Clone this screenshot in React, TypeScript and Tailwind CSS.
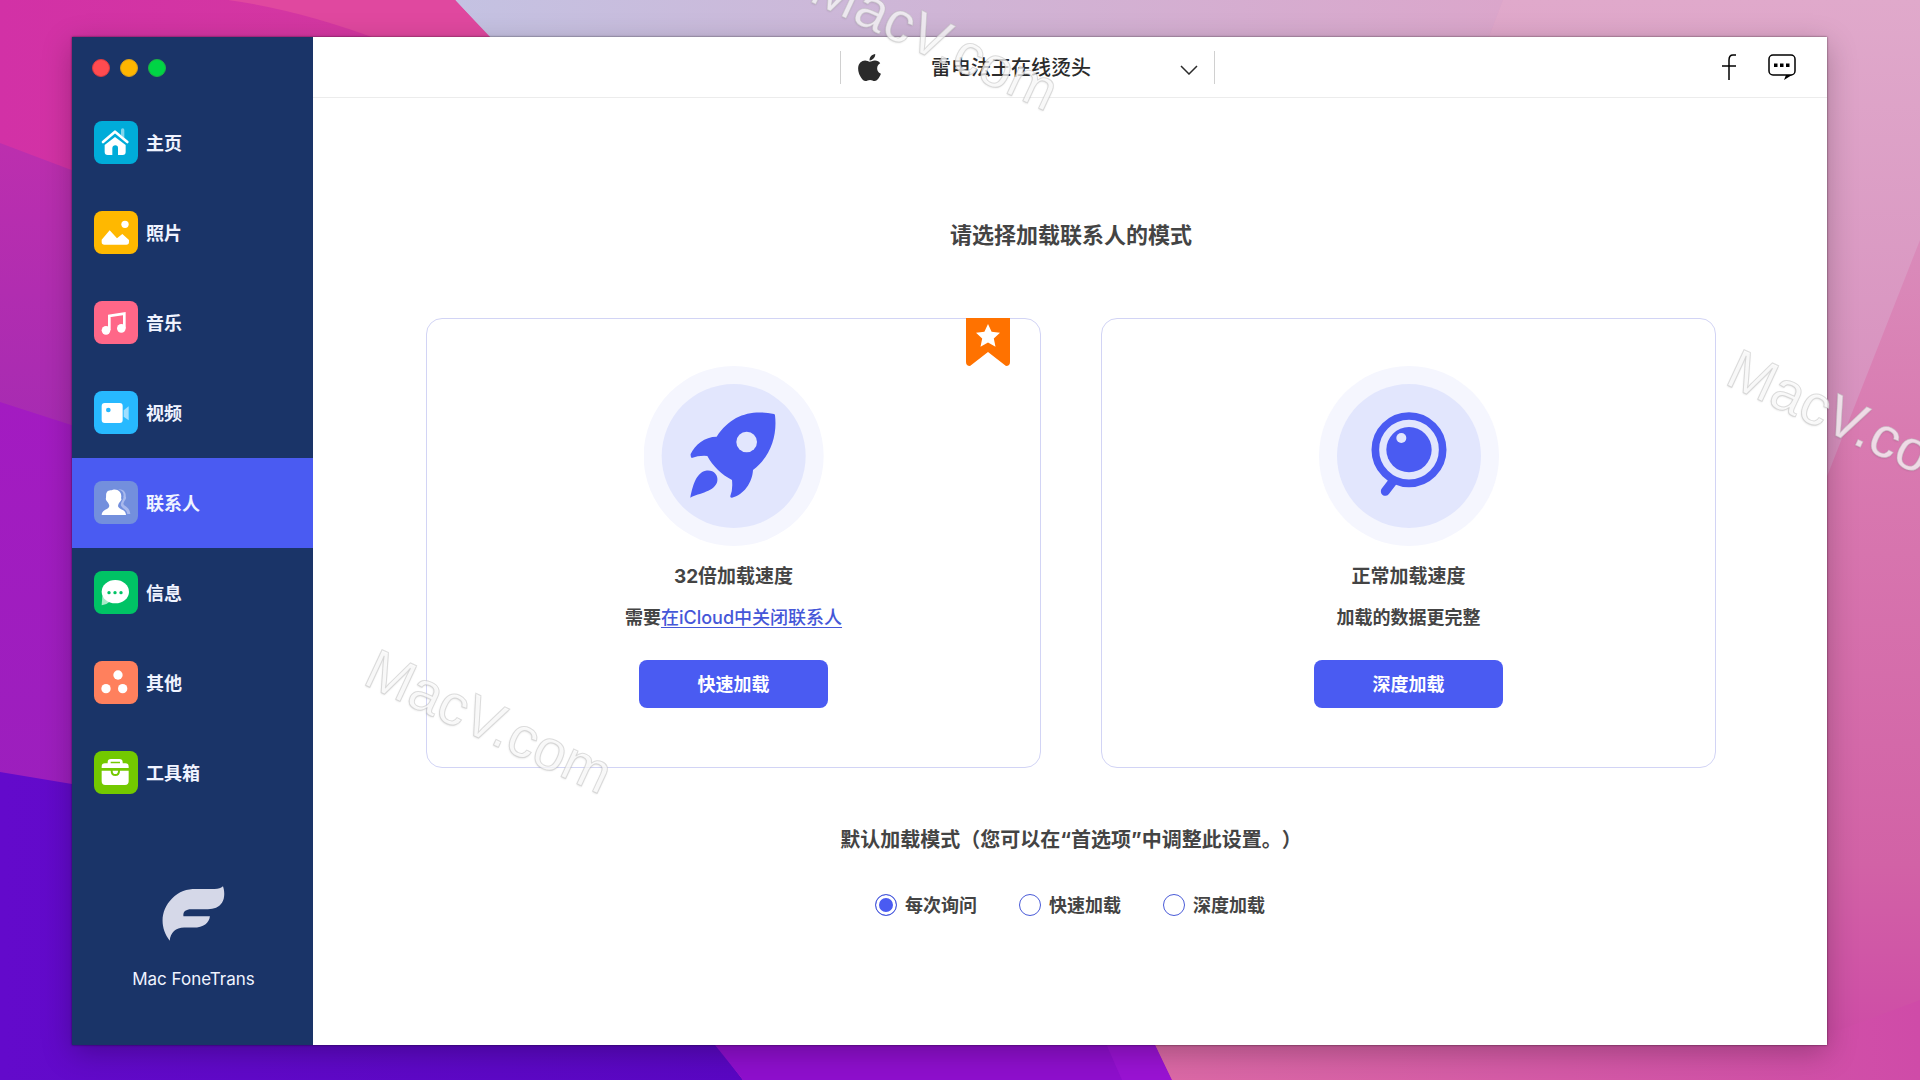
import type { ReactNode } from "react";
import { FaApple } from "react-icons/fa";

/* ---------- sidebar glyphs ---------- */

function Tile({ color, box, children }: { color: string; box: string; children: ReactNode }) {
  const [x, y] = box.split(" ").map(Number);
  return (
    <svg viewBox={box} className="h-[43px] w-11 shrink-0" aria-hidden="true">
      <rect x={x} y={y} width="132" height="129" rx="24" fill={color} />
      {children}
    </svg>
  );
}

const HomeTile = (
  <Tile color="#00acd9" box="103 273 132 129">
    <path d="M184 300q0-5 5-5t5 5v24l-10-8z" fill="#7fd6ec" />
    <path d="M130 336 166 305 203 336" fill="none" stroke="#fff" strokeWidth="8" strokeLinecap="round" strokeLinejoin="round" />
    <path d="M135 345 166 321 198 345V366q0 9-9 9H175V354q0-8-8-8t-9 8V375H144q-9 0-9-9z" fill="#fff" />
  </Tile>
);

const PhotoTile = (
  <Tile color="#ffb800" box="103 543 132 129">
    <circle cx="196" cy="583" r="11" fill="#fff" />
    <path d="M126 629 150 601 172 625 188 612 208 630V636q0 8-8 8H134q-8 0-8-8z" fill="#fff" />
  </Tile>
);

const MusicTile = (
  <Tile color="#ff6788" box="103 813 132 129">
    <path d="M149 900V858L194 851V894" fill="none" stroke="#fff" strokeWidth="8" />
    <circle cx="139" cy="901" r="13" fill="#fff" />
    <circle cx="185" cy="895" r="13" fill="#fff" />
  </Tile>
);

const VideoTile = (
  <Tile color="#27b9ff" box="103 1083 132 129">
    <path d="M192 1141 207 1129V1171L192 1160z" fill="#9fdfff" />
    <rect x="126" y="1119" width="63" height="60" rx="9" fill="#fff" />
    <circle cx="146" cy="1140" r="7" fill="#27b9ff" />
  </Tile>
);

const ContactsTile = (
  <Tile color="#738fdd" box="103 153 132 129">
    <path d="M176 178C190 176 200 187 198 199C203 207 192 212 191 222C196 231 209 230 212 252H203C202 239 190 237 184 227C181 216 194 207 191 200C194 189 188 182 176 178z" fill="#a9b9ed" />
    <path d="M142 186C146 179 154 182 160 179C178 176 188 190 184 205C190 211 176 216 175 229C179 241 198 236 199 255H126C127 237 146 241 149 228C148 216 136 213 139 203C140 196 138 191 142 186z" fill="#fff" />
  </Tile>
);

const MessageTile = (
  <Tile color="#00c365" box="103 423 132 129">
    <path d="M128 498 126 526Q142 524 152 514z" fill="#a8ebc9" />
    <ellipse cx="167" cy="485" rx="41" ry="35" fill="#fff" />
    <g fill="#00c365">
      <circle cx="148" cy="488" r="5" />
      <circle cx="166" cy="488" r="5" />
      <circle cx="184" cy="488" r="5" />
    </g>
  </Tile>
);

const OtherTile = (
  <Tile color="#ff805d" box="103 693 132 129">
    <g fill="#fff">
      <circle cx="175" cy="735" r="14" />
      <circle cx="139" cy="776" r="14" />
      <circle cx="189" cy="776" r="14" />
    </g>
  </Tile>
);

const ToolboxTile = (
  <Tile color="#73c900" box="103 963 132 129">
    <path d="M126 1014V1010Q126 1000 136 1000H144V997Q144 987 154 987H179Q189 987 189 997V1000H197Q207 1000 207 1010V1014zM153 1000H181V995H153z" fill="#fff" fillRule="evenodd" />
    <path d="M126 1022H153Q153 1038 167 1038T181 1022H207V1054Q207 1065 196 1065H137Q126 1065 126 1054z" fill="#fff" />
    <path d="M159 1022H175Q175 1032 167 1032T159 1022z" fill="#fff" />
  </Tile>
);

const navItems = [
  { label: "主页", icon: HomeTile },
  { label: "照片", icon: PhotoTile },
  { label: "音乐", icon: MusicTile },
  { label: "视频", icon: VideoTile },
  { label: "联系人", icon: ContactsTile, active: true },
  { label: "信息", icon: MessageTile },
  { label: "其他", icon: OtherTile },
  { label: "工具箱", icon: ToolboxTile },
];

/* ---------- desktop backdrop ---------- */

function Wallpaper() {
  return (
    <svg className="absolute inset-0 h-full w-full" viewBox="0 0 1920 1080" preserveAspectRatio="none" aria-hidden="true">
      <defs>
        <linearGradient id="w-top" x1="0" x2="1">
          <stop offset="0" stopColor="#c4c2e2" />
          <stop offset="0.5" stopColor="#d0b4d5" />
          <stop offset="1" stopColor="#dba6cb" />
        </linearGradient>
        <linearGradient id="w-magenta" x1="0" x2="1">
          <stop offset="0" stopColor="#d231a6" />
          <stop offset="1" stopColor="#d53a9f" />
        </linearGradient>
        <linearGradient id="w-left" x1="0" y1="0" x2="0" y2="1">
          <stop offset="0" stopColor="#bc2fae" />
          <stop offset="1" stopColor="#a62bb2" />
        </linearGradient>
        <linearGradient id="w-left2" x1="0" y1="0" x2="0" y2="1">
          <stop offset="0" stopColor="#a31bc1" />
          <stop offset="1" stopColor="#9c1fbd" />
        </linearGradient>
        <linearGradient id="w-violet" x1="0" x2="1">
          <stop offset="0" stopColor="#630acb" />
          <stop offset="1" stopColor="#5a07c4" />
        </linearGradient>
        <linearGradient id="w-right" x1="0" y1="0" x2="0" y2="1">
          <stop offset="0" stopColor="#dba0c6" />
          <stop offset="0.4" stopColor="#d97bb1" />
          <stop offset="0.8" stopColor="#d262a6" />
          <stop offset="1" stopColor="#cd47a6" />
        </linearGradient>
        <linearGradient id="w-corner" x1="0" y1="0" x2="0" y2="1">
          <stop offset="0" stopColor="#e0a9cb" />
          <stop offset="1" stopColor="#d58abb" />
        </linearGradient>
        <linearGradient id="w-base" x1="0" x2="1">
          <stop offset="0" stopColor="#dc6aa6" />
          <stop offset="1" stopColor="#cf4ba8" />
        </linearGradient>
      </defs>
      <rect width="1920" height="1080" fill="url(#w-right)" />
      <path d="M455 0H1503L1480 60H500z" fill="url(#w-top)" />
      <path d="M1503 0H1920V240L1800 545V60H1480z" fill="url(#w-corner)" />
      <path d="M0 0H455L510 60V300H0z" fill="url(#w-magenta)" />
      <path d="M228 0H455L493 40H380Q300 10 228 0z" fill="#e0489f" />
      <path d="M0 143 90 177V440H0z" fill="url(#w-left)" />
      <path d="M0 402 90 431V800H0z" fill="url(#w-left2)" />
      <path d="M0 772 90 787V1030H705L743 1080H0z" fill="url(#w-violet)" />
      <path d="M703 1030H1148L1172 1080H743z" fill="#8f0fce" />
      <path d="M1100 1030H1148L1172 1080H1122z" fill="#9a13d4" />
      <path d="M1148 1030H1840L1920 1000V1080H1172z" fill="url(#w-base)" />
    </svg>
  );
}

function Watermark({ place }: { place: string }) {
  return (
    <span
      aria-hidden="true"
      className={`pointer-events-none absolute origin-[4px_48px] rotate-[25deg] font-['Liberation_Sans',Arial,sans-serif] text-[57px] leading-none whitespace-nowrap text-white/75 [-webkit-text-stroke:1px_rgb(190_190_190/0.5)] [text-shadow:0_1px_2px_rgb(0_0_0/0.12)] ${place}`}
    >
      MacV.com
    </span>
  );
}

/* ---------- load mode cards ---------- */

function RocketArt() {
  return (
    <svg viewBox="132 78 540 540" className="size-[180px]" aria-hidden="true">
      <circle cx="401" cy="348" r="270" fill="#f5f6fe" />
      <circle cx="401" cy="348" r="216" fill="#e2e6fd" />
      <g fill="#4a5bf2">
        <path d="M522 222C456 208 393 223 350 290C314 290 285 314 272 342Q271 350 275 354Q297 346 322 348C338 378 365 404 396 420Q399 448 391 468Q390 473 396 473C431 465 457 428 459 390C514 348 532 284 525 226Q525 223 522 222z" />
        <path d="M271 473C277 443 287 398 317 392C340 388 355 404 352 423C346 455 297 459 271 473z" />
      </g>
      <circle cx="440" cy="306" r="31" fill="#e2e6fd" />
    </svg>
  );
}

function LensArt() {
  return (
    <svg viewBox="116 78 540 540" className="size-[180px]" aria-hidden="true">
      <circle cx="386" cy="348" r="270" fill="#f5f6fe" />
      <circle cx="386" cy="348" r="216" fill="#e2e6fd" />
      <path d="M338 424 315 454" stroke="#4a5bf2" strokeWidth="27" strokeLinecap="round" />
      <circle cx="386" cy="329" r="101" fill="none" stroke="#4a5bf2" strokeWidth="23" />
      <circle cx="386" cy="329" r="68" fill="#4a5bf2" />
      <circle cx="363" cy="294" r="15" fill="#e2e6fd" />
    </svg>
  );
}

function ModeCard({ art, title, action, badge, children }: { art: ReactNode; title: string; action: string; badge?: boolean; children: ReactNode }) {
  return (
    <section className="relative flex flex-1 flex-col items-center rounded-2xl border border-[#d2d4f5] pt-[47px] pb-[59px]">
      {badge && (
        <svg viewBox="0 0 44 48" className="absolute -top-px right-[30px] h-12 w-11" aria-hidden="true">
          <path d="M0 0H44V44Q44 48 40 48L22 34 4 48Q0 48 0 44z" fill="#ff7200" />
          <path d="m22 6 3.600 7.700 8.400 1-6.200 5.700 1.700 8.300L22 24.600l-7.500 4.100 1.700-8.300L10 14.700l8.400-1z" fill="#fff" />
        </svg>
      )}
      {art}
      <h2 className="mt-[17px] text-[19px] leading-7 font-bold">{title}</h2>
      <p className="mt-[13px] text-lg leading-7 font-bold">{children}</p>
      <button type="button" className="mt-7 h-12 w-[189px] rounded-lg bg-[#4a5bf2] pt-0.5 text-lg font-bold text-white">
        {action}
      </button>
    </section>
  );
}

const defaultModes = ["每次询问", "快速加载", "深度加载"];

export default function App() {
  return (
    <div className="relative flex min-h-screen overflow-hidden pt-[37px] pr-[93px] pb-[35px] pl-[72px] font-['Inter','Noto_Sans_CJK_SC',sans-serif] text-[#444]" lang="zh-CN">
      <Wallpaper />

      <div className="relative flex flex-1 bg-white shadow-[0_8px_28px_rgb(0_0_0/0.25),0_0_2px_rgb(0_0_0/0.6)]">
        <aside className="flex w-[241px] shrink-0 flex-col bg-[#1a3468] text-[#f0f3ff]">
          <div className="flex h-[61px] shrink-0 items-center gap-2.5 pl-5">
            <button type="button" aria-label="关闭" className="size-[18px] rounded-full border border-[#d9393f] bg-[#ff4b50]" />
            <button type="button" aria-label="最小化" className="size-[18px] rounded-full border border-[#d99e1c] bg-[#ffb600]" />
            <button type="button" aria-label="缩放" className="size-[18px] rounded-full border border-[#1fae45] bg-[#00d445]" />
          </div>

          <nav className="flex flex-col">
            {navItems.map((item) => (
              <button
                key={item.label}
                type="button"
                aria-current={item.active ? "page" : undefined}
                className={`flex h-[90px] items-center gap-2 pb-px pl-[22px] text-lg font-bold ${item.active ? "bg-[#4a5bf2]" : ""}`}
              >
                {item.icon}
                <span className="pt-0.5">{item.label}</span>
              </button>
            ))}
          </nav>

          <div className="mt-auto flex flex-col items-center pb-[52px] pl-0.5">
            <svg viewBox="309 168 188 164" className="h-[55px] w-[63px]" aria-hidden="true">
              <path d="M332 331C302 293 303 240 339 205C360 184 383 177 410 177H466C478 177 484 174 491 169C496 183 497 204 488 218C479 232 464 237 446 237H396C379 237 371 245 373 258H452C450 278 433 292 403 292H375C350 292 334 307 332 331z" fill="#d5d8e8" />
            </svg>
            <p className="mt-6 text-[17px] leading-7">Mac FoneTrans</p>
          </div>
        </aside>

        <main className="flex flex-1 flex-col">
          <header className="flex h-[61px] shrink-0 items-center border-b border-[#ececec] pr-[31px] pl-5 text-[#2b2b2b]">
            <div className="flex-1" />
            <label className="relative flex h-[33px] w-[375px] items-center border-x border-[#d0d0d0] pl-[13px]">
              <FaApple className="size-[31px] shrink-0" aria-hidden="true" />
              <span className="sr-only">设备</span>
              <select className="h-full flex-1 appearance-none bg-transparent pt-0.5 pl-[46px] text-xl font-medium outline-none">
                <option>雷电法王在线烫头</option>
              </select>
              <svg viewBox="0 0 18 10" className="pointer-events-none absolute top-3.5 right-4 h-2.5 w-[18px]" fill="none" stroke="currentColor" strokeWidth="1.500" aria-hidden="true">
                <path d="M1 1 9 9 17 1" />
              </svg>
            </label>
            <div className="flex-1" />
            <div className="flex items-center gap-8 text-black">
              <a href="#facebook" aria-label="Facebook">
                <svg viewBox="0 0 14 26" className="block h-[26px] w-3.5" fill="none" stroke="currentColor" strokeWidth="1.500" aria-hidden="true">
                  <path d="M7 26V6Q7 1 11 1H14M0 12H14" />
                </svg>
              </a>
              <button type="button" aria-label="反馈">
                <svg viewBox="0 0 28 26" className="block h-[26px] w-7" aria-hidden="true">
                  <rect x="1" y="1" width="26" height="20" rx="4" fill="none" stroke="currentColor" strokeWidth="1.500" />
                  <path d="M6 9.500h3.500V13H6zM12 9.500h3.500V13H12zM18 9.500h3.500V13H18zM18 21h6l-8 5z" />
                </svg>
              </button>
            </div>
          </header>

          <div className="flex flex-1 flex-col pt-[121px] pr-[111px] pl-[113px]">
            <h1 className="text-center text-[22px] leading-8 font-bold">请选择加载联系人的模式</h1>

            <div className="mt-[67px] flex gap-[60px]">
              <ModeCard art={<RocketArt />} title="32倍加载速度" action="快速加载" badge>
                需要
                <a href="#icloud" className="font-medium text-[#4557d8] underline underline-offset-3">
                  在iCloud中关闭联系人
                </a>
              </ModeCard>
              <ModeCard art={<LensArt />} title="正常加载速度" action="深度加载">
                加载的数据更完整
              </ModeCard>
            </div>

            <fieldset className="mt-[58px]">
              <legend className="mx-auto text-xl leading-7 font-bold [text-spacing-trim:space-all]">默认加载模式（您可以在“首选项”中调整此设置。）</legend>
              <div className="mt-9 flex justify-center gap-[42px] pr-0.5">
                {defaultModes.map((mode, i) => (
                  <label key={mode} className="flex items-center gap-2 text-lg leading-7 font-bold">
                    <input
                      type="radio"
                      name="default-mode"
                      defaultChecked={i === 0}
                      className="size-[22px] appearance-none rounded-full border border-[#4a5bd8] bg-white checked:bg-[#4a5bf2] checked:shadow-[inset_0_0_0_3px_#fff]"
                    />
                    <span className="pt-0.5">{mode}</span>
                  </label>
                ))}
              </div>
            </fieldset>
          </div>
        </main>
      </div>

      <Watermark place="top-[-46px] left-[807px]" />
      <Watermark place="top-[637px] left-[361px]" />
      <Watermark place="top-[337px] left-[1723px]" />
    </div>
  );
}
